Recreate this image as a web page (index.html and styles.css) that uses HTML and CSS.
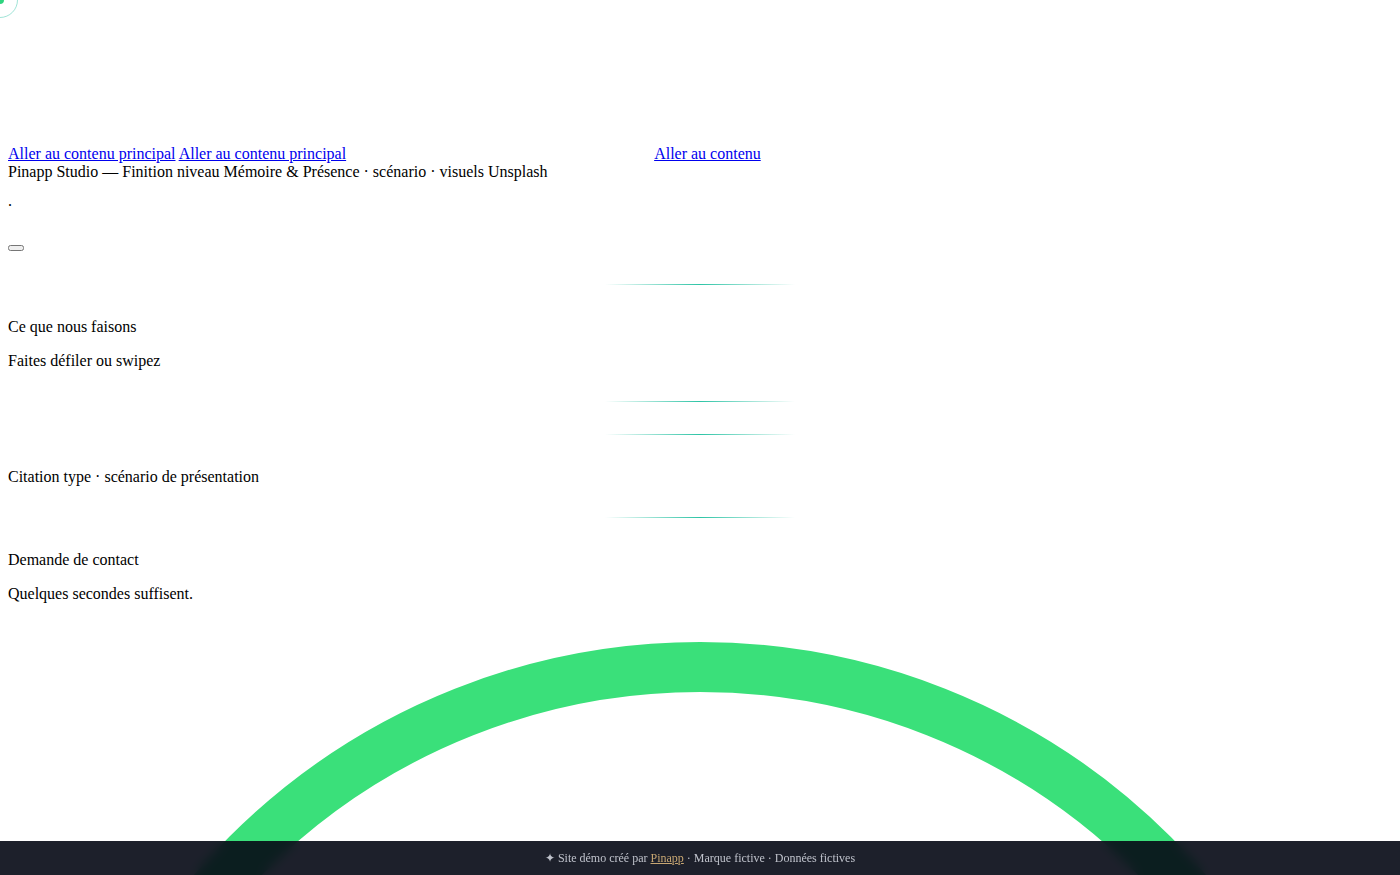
FILE: index.html
```html
<!DOCTYPE html>
<html lang="fr">
<head>
<meta charset="utf-8">
<title>Pinapp Studio</title>
<link rel="stylesheet" href="styles.css">
</head>
<body>
  <div class="cursor-ring" aria-hidden="true"></div>
  <div class="cursor-dot" aria-hidden="true"></div>

  <div class="backdrop" aria-hidden="true">
    <div class="ring"></div>
  </div>

  <header class="masthead"></header>

  <nav class="skip-links">
    <a href="#main">Aller au contenu principal</a> <a href="#main">Aller au contenu principal</a><span class="skip-far"><a href="#main">Aller au contenu</a></span>
  </nav>
  <div class="tagline">Pinapp Studio — Finition niveau Mémoire &amp; Présence · scénario · visuels Unsplash</div>
  <div class="hero-dot">.</div>
  <button class="menu-toggle" type="button" aria-label="Menu"></button>

  <main id="main">
    <div class="rule first"></div>
    <section class="block">
      <p class="block-title">Ce que nous faisons</p>
      <p class="block-hint">Faites défiler ou swipez</p>
    </section>
    <div class="rule"></div>
    <div class="rule gap"></div>
    <section class="block">
      <p class="block-title">Citation type · scénario de présentation</p>
    </section>
    <div class="rule"></div>
    <section class="block">
      <p class="block-title">Demande de contact</p>
      <p class="block-hint">Quelques secondes suffisent.</p>
    </section>
  </main>

  <footer class="site-footer">
    ✦ Site démo créé par <a href="#">Pinapp</a> · Marque fictive · Données fictives
  </footer>
</body>
</html>
```

FILE: styles.css
```css
html, body {
  background: #ffffff;
}

body {
  margin: 8px;
  font-family: "Liberation Serif", "Times New Roman", serif;
  font-size: 16px;
  color: #000000;
}

a {
  color: #0000ee;
}

/* cursor follower parked in the corner */
.cursor-ring {
  position: fixed;
  top: -18px;
  left: -18px;
  width: 36px;
  height: 36px;
  box-sizing: border-box;
  border: 1px solid rgba(46, 196, 166, 0.45);
  border-radius: 50%;
  z-index: 20;
}

.cursor-dot {
  position: fixed;
  top: -4px;
  left: -4px;
  width: 8px;
  height: 8px;
  border-radius: 50%;
  background: #2fd47f;
  z-index: 21;
}

/* decorative ring rising from the bottom */
.backdrop {
  position: fixed;
  inset: 0;
  overflow: hidden;
  pointer-events: none;
  z-index: 1;
}

.ring {
  position: absolute;
  left: 34px;
  top: 642px;
  width: 1332px;
  height: 1332px;
  box-sizing: border-box;
  border: 50px solid #3ae07a;
  border-radius: 50%;
}

.masthead {
  height: 137px;
}

.skip-links {
  line-height: 18px;
}

.skip-far {
  margin-left: 308px;
}

.tagline {
  line-height: 18px;
}

.hero-dot {
  margin-top: 11px;
  line-height: 18px;
}

.menu-toggle {
  display: block;
  margin-top: 35px;
}

.rule {
  width: 190px;
  height: 1px;
  margin: 31px auto 0;
  background: linear-gradient(90deg, rgba(46, 196, 166, 0), #2ec4a6 50%, rgba(46, 196, 166, 0));
}

.rule.first {
  margin-top: 33px;
}

.rule.gap {
  margin-top: 32px;
}

.block {
  padding-top: 33px;
}

.block p {
  margin: 0;
  line-height: 18px;
}

.block .block-hint {
  margin-top: 16px;
}

.site-footer {
  position: fixed;
  left: 0;
  right: 0;
  bottom: 0;
  height: 34px;
  line-height: 35px;
  text-align: center;
  font-size: 12px;
  color: #bfc2cb;
  background: rgba(7, 10, 22, 0.91);
  backdrop-filter: blur(6px);
  z-index: 10;
}

.site-footer a {
  color: #c7a672;
}
```
